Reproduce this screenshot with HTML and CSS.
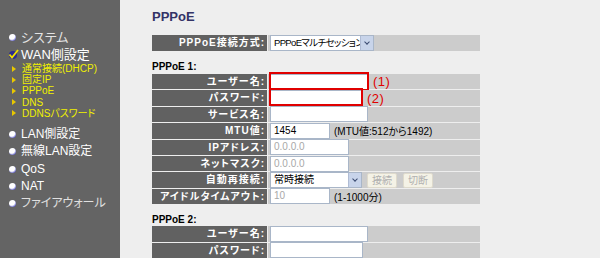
FILE: index.html
```html
<!DOCTYPE html>
<html lang="ja">
<head>
<meta charset="utf-8">
<link rel="stylesheet" href="styles.css">
</head>
<body>
<nav class="side">
  <ul class="menu">
    <li class="item"><span class="dot"></span>システム</li>
    <li class="item on"><span class="check"><svg width="11" height="11" viewBox="0 0 11 11"><circle cx="5" cy="6" r="4" fill="#2a2a90"/><path d="M1.5 5.5 L4 8.5 L10 1" fill="none" stroke="#f0e000" stroke-width="1.8"/></svg></span>WAN側設定</li>
    <li class="subs">
      <div class="sub"><span class="tri"></span>通常接続(DHCP)</div>
      <div class="sub"><span class="tri"></span>固定IP</div>
      <div class="sub"><span class="tri"></span>PPPoE</div>
      <div class="sub"><span class="tri"></span>DNS</div>
      <div class="sub"><span class="tri"></span>DDNSパスワード</div>
    </li>
    <li class="item big"><span class="dot"></span>LAN側設定</li>
    <li class="item big"><span class="dot"></span>無線LAN設定</li>
    <li class="item big"><span class="dot"></span>QoS</li>
    <li class="item big"><span class="dot"></span>NAT</li>
    <li class="item big dim"><span class="dot"></span>ファイアウォール</li>
  </ul>
</nav>
<main class="main">
  <h1 class="title">PPPoE</h1>
  <div class="form first">
    <div class="lab">PPPoE接続方式:</div>
    <div class="val"><div class="select w104"><span class="opt tight">PPPoEマルチセッション</span><i class="arr"></i></div></div>
  </div>

  <div class="group">PPPoE 1:</div>
  <div class="form">
    <div class="lab">ユーザー名:</div>
    <div class="val"><div class="inp w98"></div><span class="note n1">(1)</span><span class="mark m1"></span></div>
    <div class="lab">パスワード:</div>
    <div class="val"><div class="inp w93"></div><span class="note n2">(2)</span><span class="mark m2"></span></div>
    <div class="lab">サービス名:</div>
    <div class="val"><div class="inp w98"></div></div>
    <div class="lab">MTU値:</div>
    <div class="val"><div class="inp w60">1454</div><span class="txt">(MTU値:512から1492)</span></div>
    <div class="lab">IPアドレス:</div>
    <div class="val"><div class="inp w79 dis">0.0.0.0</div></div>
    <div class="lab">ネットマスク:</div>
    <div class="val"><div class="inp w79 dis">0.0.0.0</div></div>
    <div class="lab">自動再接続:</div>
    <div class="val"><div class="select w92"><span class="opt">常時接続</span><i class="arr"></i></div><span class="btn b1">接続</span><span class="btn">切断</span></div>
    <div class="lab">アイドルタイムアウト:</div>
    <div class="val"><div class="inp w60 dis">10</div><span class="txt">(1-1000分)</span></div>
  </div>

  <div class="group g2">PPPoE 2:</div>
  <div class="form">
    <div class="lab">ユーザー名:</div>
    <div class="val"><div class="inp w98"></div></div>
    <div class="lab">パスワード:</div>
    <div class="val"><div class="inp w93"></div></div>
  </div>
</main>
</body>
</html>
```
FILE: styles.css
```css
* { box-sizing: border-box; }
html, body { margin: 0; padding: 0; }
body {
  width: 600px; height: 258px; overflow: hidden;
  display: flex; background: #eeeeee;
  font-family: "Liberation Sans", "Noto Sans CJK JP", sans-serif;
  font-feature-settings: "palt";
}
.side {
  width: 120px; flex: none; background: #646464; height: 258px;
}
.menu { list-style: none; margin: 0; padding: 29px 0 0 9px; }
.item {
  display: flex; align-items: center; height: 17px; line-height: 17px;
  font-size: 13px; color: #e4e4e4; letter-spacing: 0; white-space: nowrap;
}
.item.on { color: #ffffff; font-size: 13px; }
.item.big { color: #ffffff; font-size: 12px; height: 17.3px; }
.item.dim { color: #e0e0e0; }
.dot {
  width: 7px; height: 7px; border-radius: 50%; margin-right: 5px; flex: none;
  background: radial-gradient(circle at 40% 35%, #ffffff 0 45%, #6a6acc 75%, #2a2a80 100%);
}
.check { width: 11px; height: 11px; margin-right: 2px; margin-left: -1px; display: flex; flex: none; }
.subs { padding: 0 0 7px 3px; }
.sub {
  display: flex; align-items: center; height: 11.2px; line-height: 11px;
  font-size: 10px; color: #f0f000; letter-spacing: 0; white-space: nowrap;
}
.tri {
  width: 0; height: 0; margin-right: 6px; flex: none;
  border-left: 4px solid #e8c800; border-top: 3px solid transparent; border-bottom: 3px solid transparent;
}
.main { flex: 1; padding: 0 0 0 32px; }
.title {
  margin: 0; padding-top: 9px; height: 35px;
  font-size: 13px; font-weight: bold; color: #333366;
}
.form {
  display: grid; grid-template-columns: 115px 212px;
  grid-auto-rows: 15.4px; gap: 1px; width: 328px;
}
.form.first { grid-auto-rows: 16px; }
.group {
  font-size: 10px; font-weight: bold; color: #000; height: 23px;
  padding-top: 10px; line-height: 12px;
}
.group.g2 { height: 22px; padding-top: 10px; }
.lab {
  background: #616161; color: #ffffff; font-size: 10px; font-weight: bold;
  text-align: right; padding-right: 2px; line-height: 15px; letter-spacing: 1px; white-space: nowrap;
}
.val {
  background: #cccccc; display: flex; align-items: center; position: relative;
  padding-left: 2px; font-size: 10px; color: #000; white-space: nowrap;
}
.inp {
  height: 16px; background: #fff; border: 1px solid #a9b6c8;
  font-size: 10px; line-height: 14px; padding-left: 3px; color: #000; flex: none;
}
.inp.dis { color: #a8a8a8; }
.w98 { width: 98px; } .w93 { width: 93px; } .w60 { width: 60px; } .w79 { width: 79px; }
.w104 { width: 104px; } .w92 { width: 92px; }
.select {
  height: 16px; background: #fff; border: 1px solid #a9b6c8;
  display: flex; align-items: center; justify-content: space-between;
  font-size: 10px; padding-left: 3px; flex: none; overflow: hidden;
}
.opt { white-space: nowrap; letter-spacing: 0; line-height: 14px; min-width: 0; }
.opt.tight { font-size: 9.5px; letter-spacing: -0.65px; }
.arr {
  width: 13px; height: 14px; background: #c8d4ea; border-left: 1px solid #b0bcd4; position: relative; flex: none;
}
.arr::after {
  content: ""; position: absolute; left: 4px; top: 4px; width: 3px; height: 3px;
  border-right: 1.5px solid #3a4a70; border-bottom: 1.5px solid #3a4a70; transform: rotate(45deg);
}
.txt { margin-left: 4px; font-size: 10px; letter-spacing: 0; }
.btn {
  height: 15px; padding: 0 4px; margin-left: 6px; background: #f4f2e6; border: 1px solid #dedacc;
  border-radius: 2px; color: #b0b0b0; font-size: 10px; line-height: 13px;
}
.btn.b1 { margin-left: 5px; }
.note { position: absolute; color: #e00000; font-size: 13px; letter-spacing: 0.5px; line-height: 15px; }
.n1 { left: 105px; top: 0; }
.n2 { left: 99px; top: 1px; }
.mark { position: absolute; border: 2px solid #e00000; }
.m1 { left: 1px; top: -2px; width: 100px; height: 19px; }
.m2 { left: 1px; top: -2px; width: 94px; height: 18px; }
```
